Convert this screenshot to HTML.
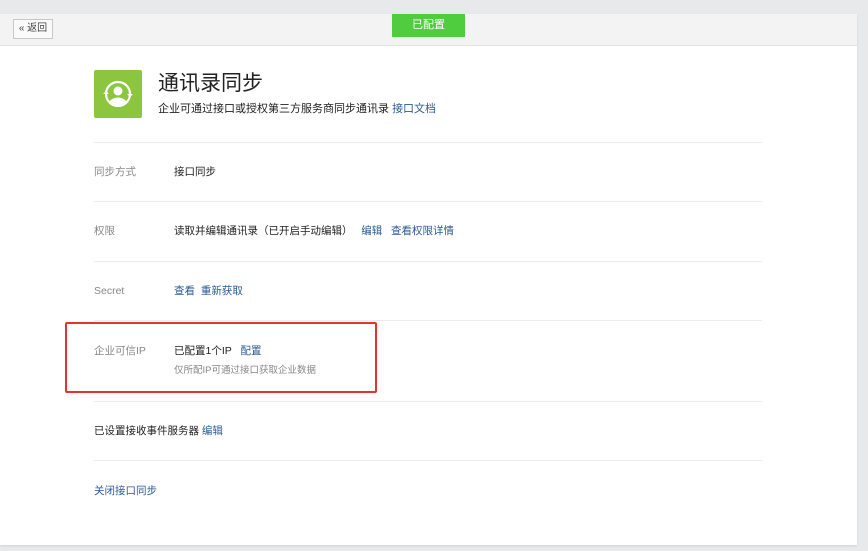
<!DOCTYPE html>
<html><head><meta charset="utf-8"><style>
*{margin:0;padding:0;box-sizing:border-box}
body{width:868px;height:551px;background:#e8e9eb;font-family:"Liberation Sans","Noto Sans CJK SC",sans-serif;font-size:10.5px;color:#222;position:relative;overflow:hidden}
.card{position:absolute;left:0;top:14px;width:857px;height:531px;background:#fff;box-shadow:0 1px 2px rgba(0,0,0,.1)}
.hd{position:absolute;left:0;top:0;width:857px;height:32px;background:#f3f3f3;border-bottom:1px solid #e2e2e2}
.back{position:absolute;left:13px;top:5px;width:40px;height:20px;border:1px solid #c8c8c8;background:#fafafa;font-size:10px;color:#444;line-height:18px;text-align:center}
.ok{position:absolute;left:392px;top:0;width:73px;height:23px;background:#4fcd3e;color:#fff;font-size:11px;line-height:23px;text-align:center}
.a{position:absolute;white-space:nowrap;line-height:14px}
.l{color:#888}
.lk{color:#2b5a93}
.line{position:absolute;left:94px;width:668px;height:1px;background:#ececec}
.icon{position:absolute;left:94px;top:56px;width:48px;height:48px;background:#8cc63f;border-radius:2px}
</style></head><body>
<div class="card">
<div class="hd"><div class="back">« 返回</div><div class="ok">已配置</div></div>
<div class="icon"><svg width="48" height="48" viewBox="0 0 48 48"><circle cx="24" cy="24" r="12" fill="none" stroke="#fff" stroke-width="2.2"/><circle cx="24" cy="21" r="4.5" fill="#fff"/><path d="M15.5 31 Q24 24 32.5 31 L32 32 Q24 38 16 32Z" fill="#fff"/><path d="M9 24 L12 21 L15 24Z M33 24 L36 27 L39 24Z" fill="#fff"/></svg></div>
<div class="a" style="left:158px;top:57px;font-size:21px;line-height:26px;color:#222">通讯录同步</div>
<div class="a" style="left:158px;top:88px;font-size:11px">企业可通过接口或授权第三方服务商同步通讯录 <span class="lk">接口文档</span></div>
<div class="line" style="top:128px"></div>
<div class="a l" style="left:94px;top:151px">同步方式</div>
<div class="a" style="left:174px;top:151px">接口同步</div>
<div class="line" style="top:187px"></div>
<div class="a l" style="left:94px;top:210px">权限</div>
<div class="a" style="left:174px;top:210px">读取并编辑通讯录（已开启手动编辑）&nbsp;&nbsp;&nbsp;<span class="lk">编辑</span>&nbsp;&nbsp;&nbsp;<span class="lk">查看权限详情</span></div>
<div class="line" style="top:247px"></div>
<div class="a l" style="left:94px;top:270px">Secret</div>
<div class="a lk" style="left:174px;top:270px">查看&nbsp;&nbsp;重新获取</div>
<div class="line" style="top:306px"></div>
<div style="position:absolute;left:65px;top:308px;width:312px;height:71px;border:2px solid #e8322e;border-radius:2px"></div>
<div class="a l" style="left:94px;top:330px">企业可信IP</div>
<div class="a" style="left:174px;top:330px">已配置1个IP&nbsp;&nbsp;&nbsp;<span class="lk">配置</span></div>
<div class="a l" style="left:174px;top:350px;font-size:9.5px">仅所配IP可通过接口获取企业数据</div>
<div class="line" style="top:387px"></div>
<div class="a" style="left:94px;top:410px">已设置接收事件服务器 <span class="lk">编辑</span></div>
<div class="line" style="top:446px"></div>
<div class="a lk" style="left:94px;top:470px">关闭接口同步</div>
</div>
</body></html>
